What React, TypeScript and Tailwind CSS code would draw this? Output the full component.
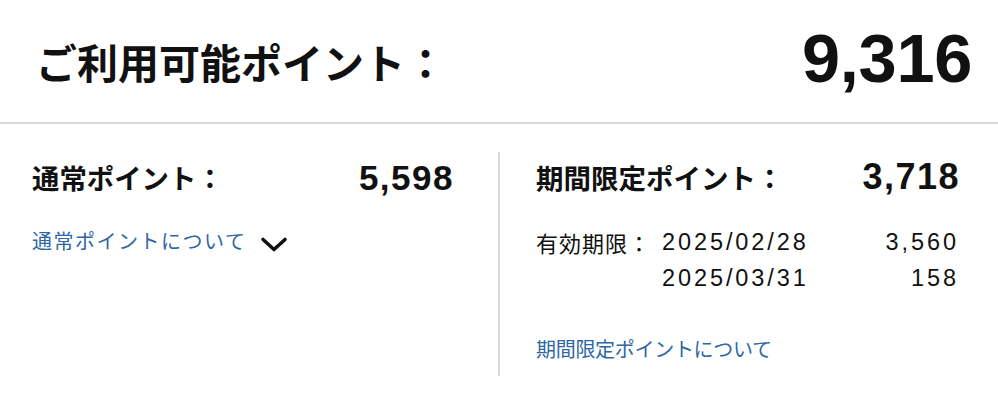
import React from "react";

const font = { fontFamily: '"Liberation Sans", "Noto Sans CJK JP", sans-serif' };

export default function App() {
  return (
    <div className="w-[998px] h-[400px] bg-white text-[#111111] overflow-hidden" style={font}>
      <div className="flex items-center justify-between h-[124px] pl-[36px] pr-[26px] border-b-2 border-[#d6d9d9]">
        <div className="text-[41px] font-bold leading-none pt-[8px]">ご利用可能ポイント：</div>
        <div className="text-[68.5px] font-bold leading-none tracking-[-0.3px] pb-[4px]">9,316</div>
      </div>
      <div className="grid grid-cols-[500px_498px] pt-[28px]">
        <div className="h-[224px] border-r-2 border-[#d6d9d9] pl-[32px] pr-[44px] pt-[6px]">
          <div className="flex items-center justify-between h-[38px]">
            <div className="text-[27.4px] font-bold leading-none pt-[6px]">通常ポイント：</div>
            <div className="text-[35px] font-bold leading-none tracking-[1.5px]">5,598</div>
          </div>
          <div className="flex items-center mt-[32px] h-[28px]">
            <span className="text-[20px] text-[#2f67a5] leading-none tracking-[1.5px]">通常ポイントについて</span>
            <svg className="ml-[14px] mt-[6px]" width="28" height="18" viewBox="0 0 28 18" fill="none">
              <path d="M3 3.5 L14 13.5 L25 3.5" stroke="#111111" strokeWidth="3.6" strokeLinecap="round" strokeLinejoin="round" />
            </svg>
          </div>
        </div>
        <div className="pl-[36px] pr-[38px] pt-[6px]">
          <div className="flex items-center justify-between h-[38px]">
            <div className="text-[27.5px] font-bold leading-none pt-[6px]">期間限定ポイント：</div>
            <div className="text-[36px] font-bold leading-none tracking-[1.5px]">3,718</div>
          </div>
          <div className="flex mt-[33px] leading-none pr-[4px]">
            <div className="w-[126px] h-[28px] flex items-center text-[22px] tracking-[1px] pt-[3px]">有効期限：</div>
            <div className="flex-1 flex flex-col gap-[8px] text-[23.5px]">
              <div className="flex justify-between h-[28px] items-center tracking-[2.9px]">
                <span>2025/02/28</span>
                <span className="mr-[-2.9px]">3,560</span>
              </div>
              <div className="flex justify-between h-[28px] items-center tracking-[2.9px]">
                <span>2025/03/31</span>
                <span className="mr-[-2.9px]">158</span>
              </div>
            </div>
          </div>
          <div className="mt-[47px] text-[20px] text-[#2f67a5] leading-none tracking-[-0.3px]">期間限定ポイントについて</div>
        </div>
      </div>
    </div>
  );
}
